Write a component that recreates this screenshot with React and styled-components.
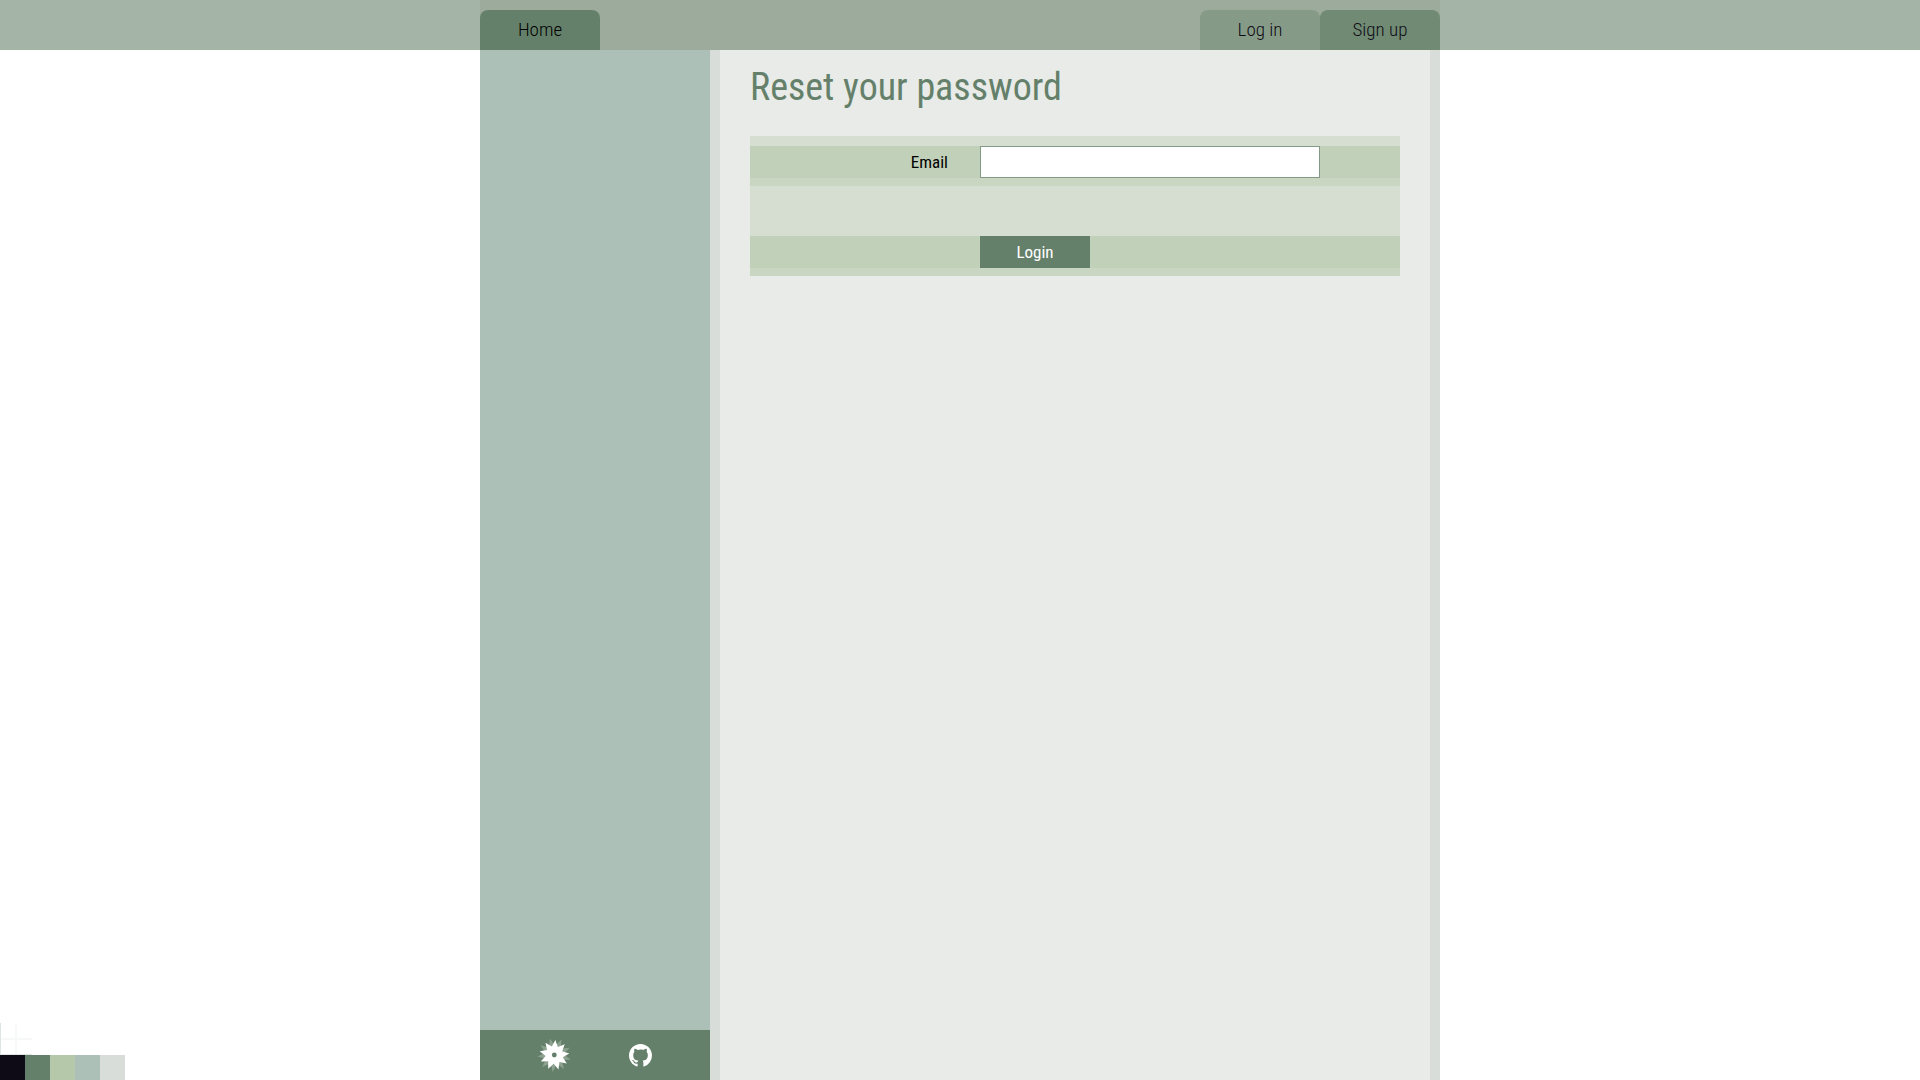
import React from "react";
import styled, { createGlobalStyle } from "styled-components";

const ink = "#0f0b16";
const green = "#65806a";
const leaf = "#b5c9aa";
const mist = "#adc0b8";
const pale = "#d8ddd9";
const swatches = [ink, green, leaf, mist, pale];

const GlobalStyle = createGlobalStyle`
  * { box-sizing: border-box; }
  body {
    margin: 0;
    background: #fff;
    color: #000;
    font-family: "Roboto Condensed", Roboto, sans-serif;
    font-size: 17px;
    line-height: 24px;
  }
`;

const Page = styled.div`
  min-height: 100vh;
  display: flex;
  flex-direction: column;
`;

const Header = styled.header`
  background: #a4b4a6;
`;

const Nav = styled.nav`
  max-width: 960px;
  height: 50px;
  margin: 0 auto;
  padding-top: 10px;
  display: flex;
  background: #9cab9b;
`;

const Account = styled.div`
  display: flex;
  margin-left: auto;
`;

const Tab = styled.a`
  width: 120px;
  height: 40px;
  border-radius: 8px 8px 0 0;
  background: ${({ $tone }) => $tone};
  color: ${({ $color }) => $color || ink};
  font-size: 19px;
  font-weight: 300;
  line-height: 40px;
  text-align: center;
  text-decoration: none;
`;

const Body = styled.div`
  flex: 1;
  width: 100%;
  max-width: 960px;
  margin: 0 auto;
  display: flex;
`;

const Sidebar = styled.aside`
  flex: 0 0 230px;
  display: flex;
  flex-direction: column;
  background: ${mist};
`;

const Links = styled.footer`
  height: 50px;
  margin-top: auto;
  padding: 0 58px 0 56px;
  display: flex;
  align-items: center;
  justify-content: space-between;
  background: ${green};
  a { display: flex; color: #fff; }
`;

const Main = styled.main`
  flex: 1;
  padding: 12px 30px;
  border: solid ${pale};
  border-width: 0 10px;
  background: #e8ebe7;
`;

const Title = styled.h1`
  margin: 0 0 24px;
  color: ${green};
  font-size: 38px;
  font-weight: 400;
  line-height: 50px;
`;

const Form = styled.form`
  display: flex;
  flex-direction: column;
  gap: 50px;
  padding-top: 10px;
  background: #d6ded2;
`;

const Row = styled.div`
  display: grid;
  grid-template-columns: 230px 340px;
  height: 40px;
  border-bottom: 8px solid #c9d6c2;
  background: #c1d0b8;
`;

const Label = styled.label`
  padding-right: 32px;
  line-height: 32px;
  text-align: right;
`;

const Input = styled.input`
  height: 32px;
  padding: 0 8px;
  border: 1px solid #839a87;
  border-radius: 0;
  outline: 0;
  background: #fff;
  font: inherit;
`;

const Submit = styled.button`
  grid-column: 2;
  width: 110px;
  height: 32px;
  padding: 0;
  border: 0;
  background: ${green};
  color: #fff;
  font: inherit;
`;

const Palette = styled.div`
  position: fixed;
  left: 0;
  bottom: 0;
`;

const Swatches = styled.div`
  display: flex;
`;

const Swatch = styled.span`
  width: 25px;
  height: 25px;
  background: ${({ $color }) => $color};
`;

const GridMark = styled.svg`
  display: block;
`;

const star = (cx, cy, outer, inner, turn) =>
  Array.from({ length: 18 }, (_, i) => {
    const a = ((i * 20 + turn) * Math.PI) / 180;
    const r = i % 2 ? inner : outer;
    return `${cx + r * Math.cos(a)},${cy + r * Math.sin(a)}`;
  }).join(" ");

const StarIcon = () => (
  <svg width="36" height="36" viewBox="0 0 36 36" aria-hidden="true">
    <polygon points={star(18.3, 18, 17, 9, 15)} fill="#8da190" />
    <polygon points={star(18.3, 18, 15, 8.8, -6)} fill="#fff" />
    <circle cx="18.3" cy="18" r="2.4" fill={green} />
  </svg>
);

const GithubIcon = () => (
  <svg width="23" height="23" viewBox="0 0 16 16" fill="currentColor" aria-hidden="true">
    <path d="M8 0C3.58 0 0 3.58 0 8c0 3.54 2.29 6.53 5.47 7.59.4.07.55-.17.55-.38 0-.19-.01-.82-.01-1.49-2.01.37-2.53-.49-2.69-.94-.09-.23-.48-.94-.82-1.13-.28-.15-.68-.52-.01-.53.63-.01 1.08.58 1.23.82.72 1.21 1.87.87 2.33.66.07-.52.28-.87.51-1.07-1.78-.2-3.64-.89-3.64-3.95 0-.87.31-1.59.82-2.15-.08-.2-.36-1.02.08-2.12 0 0 .67-.21 2.2.82A7.6 7.6 0 0 1 8 3.87c.68 0 1.36.09 2 .27 1.53-1.04 2.2-.82 2.2-.82.44 1.1.16 1.92.08 2.12.51.56.82 1.27.82 2.15 0 3.07-1.87 3.75-3.65 3.95.29.25.54.73.54 1.48 0 1.07-.01 1.93-.01 2.2 0 .21.15.46.55.38A8.01 8.01 0 0 0 16 8c0-4.42-3.58-8-8-8Z" />
  </svg>
);

export default function App() {
  return (
    <>
      <GlobalStyle />
      <Page>
        <Header>
          <Nav>
            <Tab href="#home" $tone={green} $color="#000">Home</Tab>
            <Account>
              <Tab href="#login" $tone="#869b87">Log in</Tab>
              <Tab href="#signup" $tone="#708a73">Sign up</Tab>
            </Account>
          </Nav>
        </Header>
        <Body>
          <Sidebar>
            <Links>
              <a href="#project" aria-label="Project"><StarIcon /></a>
              <a href="#github" aria-label="GitHub"><GithubIcon /></a>
            </Links>
          </Sidebar>
          <Main>
            <Title>Reset your password</Title>
            <Form onSubmit={(e) => e.preventDefault()}>
              <Row>
                <Label htmlFor="email">Email</Label>
                <Input id="email" type="email" />
              </Row>
              <Row>
                <Submit type="submit">Login</Submit>
              </Row>
            </Form>
          </Main>
        </Body>
      </Page>
      <Palette aria-hidden="true">
        <GridMark width="32" height="32" viewBox="0 0 32 32">
          <path d="M15 0h2v32h-2zM0 15h32v2H0z" fill="#f7f9f8" />
          <path d="M0 0h1v32H0zM0 31h32v1H0z" fill="#dfe5e1" />
        </GridMark>
        <Swatches>
          {swatches.map((c) => <Swatch key={c} $color={c} />)}
        </Swatches>
      </Palette>
    </>
  );
}
